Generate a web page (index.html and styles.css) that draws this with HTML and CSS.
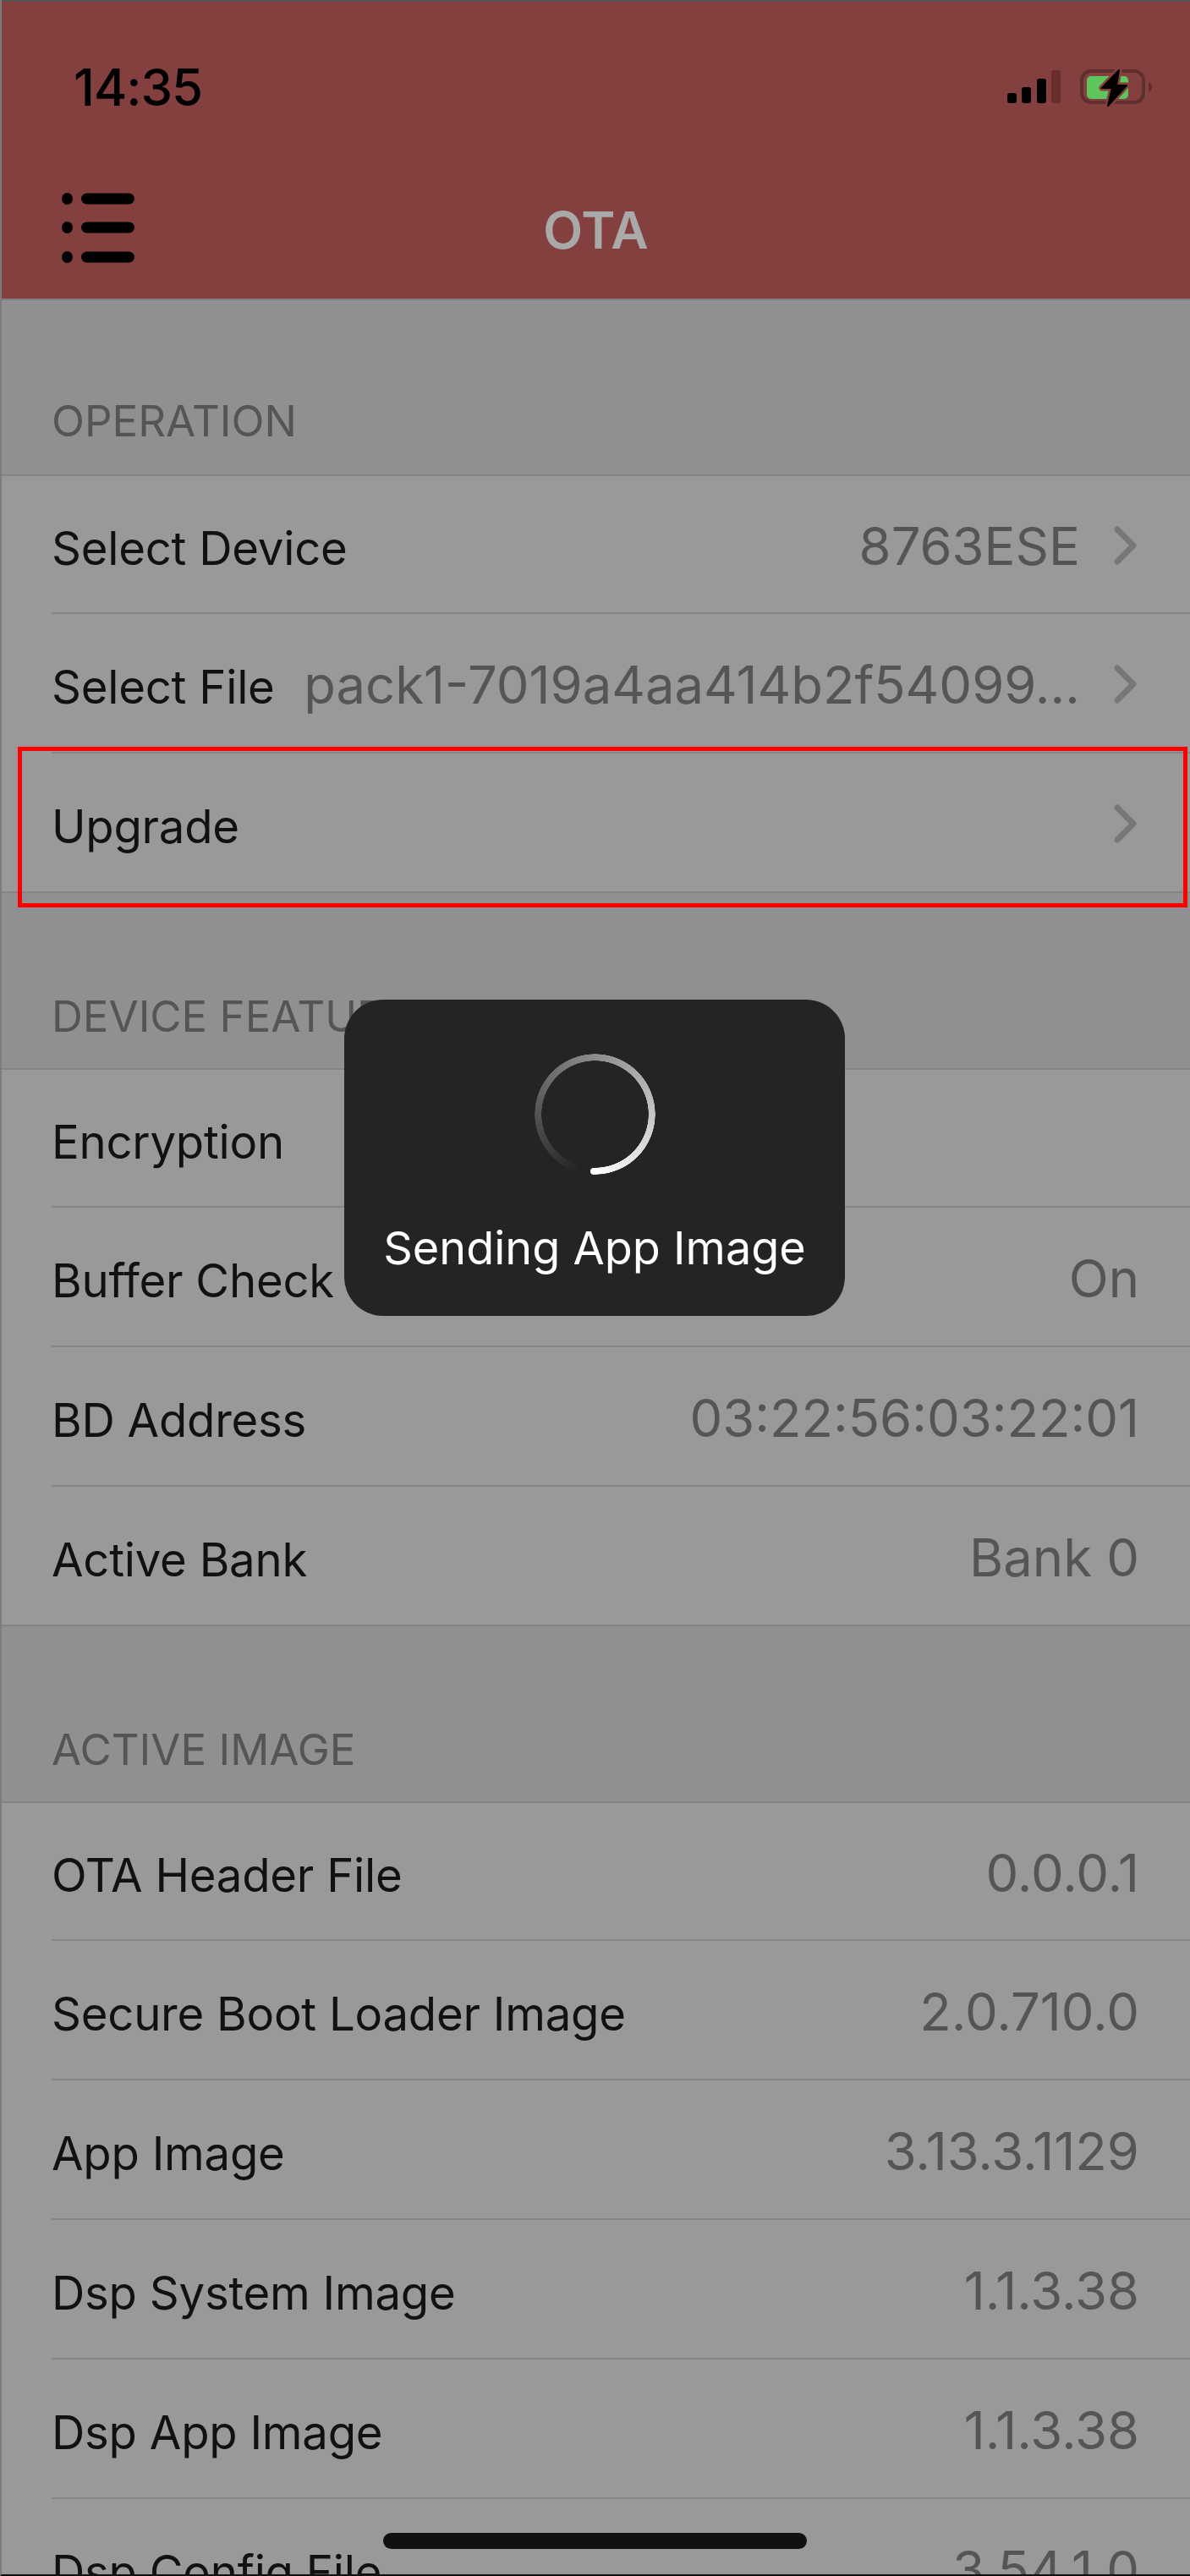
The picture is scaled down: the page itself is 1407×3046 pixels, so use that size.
FILE: index.html
```html
<!DOCTYPE html>
<html lang="en">
<head>
<meta charset="utf-8">
<title>OTA</title>
<link rel="stylesheet" href="styles.css">
</head>
<body>
<div class="phone">
  <header class="nav">
    <div class="status">
      <span class="time">14:35</span>
      <div class="status-icons">
        <svg class="signal" width="64" height="40" viewBox="0 0 64 40">
          <rect x="0" y="27" width="11" height="12" rx="3" fill="#000"/>
          <rect x="17" y="20" width="11" height="19" rx="3" fill="#000"/>
          <rect x="35" y="10" width="11" height="29" rx="3" fill="#000"/>
          <rect x="52" y="0" width="11" height="39" rx="3" fill="#682d2d"/>
        </svg>
        <svg class="battery" width="88" height="46" viewBox="0 0 88 46">
          <rect x="2" y="4" width="73" height="37" rx="11" fill="none" stroke="#5f2e2e" stroke-width="4"/>
          <rect x="8" y="10" width="49" height="27" rx="5" fill="#5ec45e"/>
          <path d="M81 17c3 1 4 3 4 6s-1 5-4 6z" fill="#5f2e2e"/>
          <path d="M46 3 26 24h12l-5 21 22-24H43z" fill="#843f3f" stroke="#843f3f" stroke-width="7" stroke-linejoin="round"/>
          <path d="M46 3 26 24h12l-5 21 22-24H43z" fill="#000" stroke="#000" stroke-width="2" stroke-linejoin="round"/>
        </svg>
      </div>
    </div>
    <div class="bar">
      <svg class="menu" width="86" height="84" viewBox="0 0 86 84">
        <ellipse cx="6.500" cy="7" rx="6.500" ry="7" fill="#000"/>
        <rect x="23" y="0.500" width="63" height="13" rx="6.500" fill="#000"/>
        <ellipse cx="6.500" cy="41" rx="6.500" ry="7" fill="#000"/>
        <rect x="23" y="34.500" width="63" height="13" rx="6.500" fill="#000"/>
        <ellipse cx="6.500" cy="76" rx="6.500" ry="7" fill="#000"/>
        <rect x="23" y="69.500" width="63" height="13" rx="6.500" fill="#000"/>
      </svg>
      <h1 class="title">OTA</h1>
    </div>
  </header>

  <section class="section">
    <h2 class="section-title">OPERATION</h2>
    <div class="group">
      <div class="row">
        <span class="label">Select Device</span>
        <span class="value">8763ESE</span>
        <svg class="chev" width="27" height="46" viewBox="0 0 27 46"><path d="M4 4l19 19L4 42" fill="none" stroke="#777" stroke-width="7" stroke-linecap="round" stroke-linejoin="round"/></svg>
      </div>
      <div class="row">
        <span class="label">Select File</span>
        <span class="value">pack1-7019a4aa414b2f54099…</span>
        <svg class="chev" width="27" height="46" viewBox="0 0 27 46"><path d="M4 4l19 19L4 42" fill="none" stroke="#777" stroke-width="7" stroke-linecap="round" stroke-linejoin="round"/></svg>
      </div>
      <div class="row">
        <span class="label">Upgrade</span>
        <svg class="chev" width="27" height="46" viewBox="0 0 27 46"><path d="M4 4l19 19L4 42" fill="none" stroke="#777" stroke-width="7" stroke-linecap="round" stroke-linejoin="round"/></svg>
      </div>
    </div>
  </section>

  <section class="section">
    <h2 class="section-title">DEVICE FEATURES</h2>
    <div class="group">
      <div class="row"><span class="label">Encryption</span></div>
      <div class="row"><span class="label">Buffer Check</span><span class="value">On</span></div>
      <div class="row"><span class="label">BD Address</span><span class="value">03:22:56:03:22:01</span></div>
      <div class="row"><span class="label">Active Bank</span><span class="value">Bank 0</span></div>
    </div>
  </section>

  <section class="section">
    <h2 class="section-title">ACTIVE IMAGE</h2>
    <div class="group">
      <div class="row"><span class="label">OTA Header File</span><span class="value">0.0.0.1</span></div>
      <div class="row"><span class="label">Secure Boot Loader Image</span><span class="value">2.0.710.0</span></div>
      <div class="row"><span class="label">App Image</span><span class="value">3.13.3.1129</span></div>
      <div class="row"><span class="label">Dsp System Image</span><span class="value">1.1.3.38</span></div>
      <div class="row"><span class="label">Dsp App Image</span><span class="value">1.1.3.38</span></div>
      <div class="row"><span class="label">Dsp Config File</span><span class="value">3.54.1.0</span></div>
    </div>
  </section>

  <div class="highlight"></div>

  <div class="hud">
    <div class="spinner"><div class="spinner-ring"></div></div>
    <div class="hud-text">Sending App Image</div>
  </div>

  <div class="home"></div>
</div>
</body>
</html>
```

FILE: styles.css
```css
* { box-sizing: border-box; }
html, body { margin: 0; padding: 0; background: #909092; }
body { font-family: Inter, "Liberation Sans", sans-serif; }
.phone {
  position: relative;
  width: 1407px;
  height: 3046px;
  overflow: hidden;
  background: #909092;
  border-left: 2px solid #7c7c7c;
  border-bottom: 2px solid #111;
}
.nav {
  height: 355px;
  background: #843f3f;
  border-top: 2px solid #555;
  border-bottom: 2px solid #808080;
  display: flex;
  flex-direction: column;
}
.status {
  display: flex;
  justify-content: space-between;
  align-items: center;
  height: 132px;
  padding: 70px 42px 0 85px;
}
.time { font-size: 60px; font-weight: 500; color: #000; letter-spacing: -1px; }
.status-icons { display: flex; align-items: center; gap: 22px; }
.bar {
  position: relative;
  flex: 1;
  padding-top: 54px;
  display: flex;
  align-items: center;
  justify-content: center;
}
.menu { position: absolute; left: 71px; top: 94px; }
.title { margin: 0; font-size: 61px; font-weight: 600; color: #a9a9a9; position: relative; top: 1px; }
.section { padding-top: 89px; }
.nav + .section { padding-top: 88px; }
.section-title {
  margin: 0;
  height: 118px;
  padding: 28px 0 0 59px;
  font-size: 51px;
  line-height: 58px;
  font-weight: 400;
  color: #555;
}
.nav + .section .section-title { padding-top: 26px; }
.group {
  background: #999;
  border-top: 2px solid #848484;
}
.row {
  height: 165px;
  margin-left: 59px;
  padding: 8px 60px 0 0;
  display: flex;
  align-items: center;
  border-bottom: 2px solid #848484;
}
.row:first-child { height: 163px; }
.group .row:last-child { margin-left: 0; padding-left: 59px; }
.label { font-size: 54.500px; letter-spacing: -0.250px; color: #111; white-space: nowrap; }
.value {
  margin: 0 0 4px auto;
  font-size: 61.500px;
  color: #555;
  white-space: nowrap;
}
.chev { margin: 0 3px 6px 40px; flex: none; }
.label + .chev { margin-left: auto; }
.highlight {
  position: absolute;
  left: 19px;
  top: 883px;
  width: 1383px;
  height: 190px;
  border: 5px solid #f00;
}
.hud {
  position: absolute;
  left: 405px;
  top: 1182px;
  width: 592px;
  height: 374px;
  border-radius: 46px;
  background: #242424;
  display: flex;
  flex-direction: column;
  align-items: center;
}
.spinner {
  position: relative;
  width: 143px;
  height: 143px;
  margin-top: 64px;
}
.spinner-ring {
  width: 100%;
  height: 100%;
  border-radius: 50%;
  background: conic-gradient(from 195deg, rgba(255,255,255,0) 0deg, #fff 345deg, rgba(255,255,255,0) 345deg);
  -webkit-mask: radial-gradient(circle, transparent 63px, #000 63.500px, #000 71px, transparent 71.500px);
  mask: radial-gradient(circle, transparent 63px, #000 63.500px, #000 71px, transparent 71.500px);
}
.spinner::after {
  content: "";
  position: absolute;
  left: 66px;
  top: 134.500px;
  width: 8px;
  height: 8px;
  border-radius: 50%;
  background: #fff;
}
.hud-text {
  margin-top: 55px;
  font-size: 54px;
  line-height: 64px;
  color: #fff;
  white-space: nowrap;
}
.home {
  position: absolute;
  left: 451px;
  top: 2995px;
  width: 501px;
  height: 19px;
  border-radius: 10px;
  background: #111;
}
```
